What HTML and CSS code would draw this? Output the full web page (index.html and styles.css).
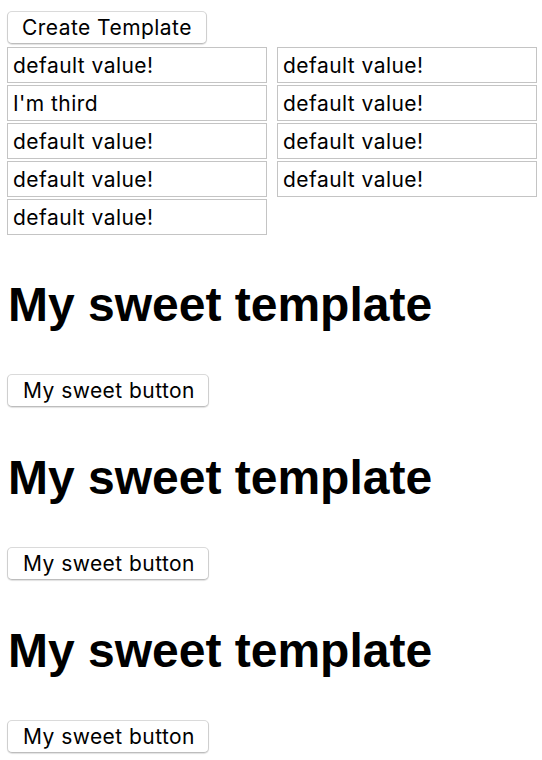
FILE: index.html
```html
<!DOCTYPE html>
<html>
<head>
<meta charset="utf-8">
<link rel="stylesheet" href="styles.css">
</head>
<body>
<div class="page">
  <button class="btn">Create Template</button>
  <div class="fields">
    <input class="field" type="text" value="default value!">
    <input class="field" type="text" value="default value!">
    <input class="field" type="text" value="I'm third">
    <input class="field" type="text" value="default value!">
    <input class="field" type="text" value="default value!">
    <input class="field" type="text" value="default value!">
    <input class="field" type="text" value="default value!">
    <input class="field" type="text" value="default value!">
    <input class="field" type="text" value="default value!">
  </div>
  <section class="tpl">
    <h1 class="tpl-title">My sweet template</h1>
    <button class="btn btn-sweet">My sweet button</button>
  </section>
  <section class="tpl">
    <h1 class="tpl-title">My sweet template</h1>
    <button class="btn btn-sweet">My sweet button</button>
  </section>
  <section class="tpl">
    <h1 class="tpl-title">My sweet template</h1>
    <button class="btn btn-sweet">My sweet button</button>
  </section>
</div>
</body>
</html>
```

FILE: styles.css
```css
html, body {
  margin: 0;
  padding: 0;
  background: #ffffff;
}

.page {
  display: flex;
  flex-direction: column;
  align-items: flex-start;
  padding: 11px 0 0 7px;
  font-family: Inter, "Liberation Sans", Arial, sans-serif;
  color: #000;
}

.btn {
  box-sizing: border-box;
  height: 33px;
  padding: 0 14px;
  margin: 0;
  font-family: Inter, "Liberation Sans", Arial, sans-serif;
  font-size: 21px;
  letter-spacing: 0.45px;
  color: #000;
  background: #ffffff;
  border: 1px solid #cfcfcf;
  border-top-color: #dadada;
  border-bottom-color: #bdbdbd;
  border-radius: 5px;
  box-shadow: 0 1px 1px rgba(0, 0, 0, 0.12);
  line-height: 31px;
}

.fields {
  display: grid;
  grid-template-columns: 260px 260px;
  grid-auto-rows: 36px;
  column-gap: 10px;
  row-gap: 2px;
  margin-top: 3px;
  margin-bottom: 42px;
}

.field {
  box-sizing: border-box;
  width: 260px;
  height: 36px;
  margin: 0;
  padding: 0 5px;
  border: 1px solid #c4c4c4;
  border-radius: 0;
  font-family: Inter, "Liberation Sans", Arial, sans-serif;
  font-size: 21px;
  letter-spacing: 0.45px;
  color: #000;
  background: #fff;
  outline: none;
}

.tpl {
  display: flex;
  flex-direction: column;
  align-items: flex-start;
  margin-bottom: 43px;
}

.tpl-title {
  margin: 0 0 42px 1px;
  font-family: "Liberation Sans", Arial, Helvetica, sans-serif;
  font-size: 48px;
  font-weight: bold;
  line-height: 55px;
  color: #000;
}

.btn-sweet {
  padding: 0 13px 0 15px;
}
```
